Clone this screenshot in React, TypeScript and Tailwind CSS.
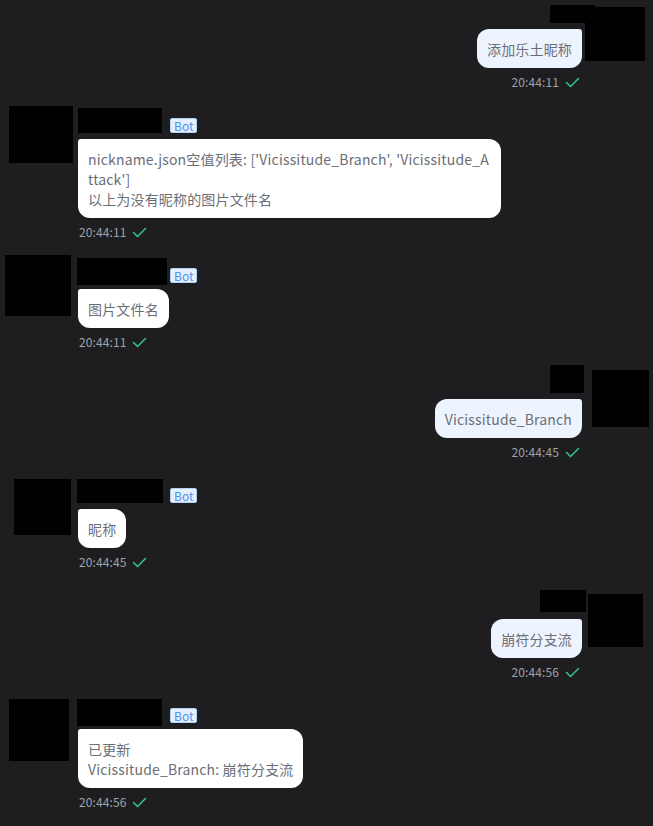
type Msg = {
  side: "left" | "right";
  lines: string[];
  time: string;
  avatar: string;
  name: string;
  first?: boolean;
};

// redaction boxes are baked in as class strings so tailwind can see them
const messages: Msg[] = [
  {
    side: "right",
    lines: ["添加乐土昵称"],
    time: "20:44:11",
    avatar: "ml-[3px] mt-[7px] w-[60px] h-[54px]",
    name: "mr-[-13px] mt-[5px] w-[45px] h-[18px]",
    first: true,
  },
  {
    side: "left",
    lines: ["nickname.json空值列表: ['Vicissitude_Branch', 'Vicissitude_Attack']", "以上为没有昵称的图片文件名"],
    time: "20:44:11",
    avatar: "ml-[9px] mt-[-2px] w-[64px] h-[57px]",
    name: "ml-[0px] mt-[0px] w-[84px] h-[25px]",
  },
  {
    side: "left",
    lines: ["图片文件名"],
    time: "20:44:11",
    avatar: "ml-[5px] mt-[-3px] w-[66px] h-[61px]",
    name: "ml-[-1px] mt-[0px] w-[90px] h-[27px]",
  },
  {
    side: "right",
    lines: ["Vicissitude_Branch"],
    time: "20:44:45",
    avatar: "ml-[10px] mt-[2px] w-[57px] h-[57px]",
    name: "mr-[-2px] mt-[-3px] w-[34px] h-[28px]",
  },
  {
    side: "left",
    lines: ["昵称"],
    time: "20:44:45",
    avatar: "ml-[14px] mt-[1px] w-[57px] h-[56px]",
    name: "ml-[-1px] mt-[1px] w-[86px] h-[24px]",
  },
  {
    side: "right",
    lines: ["崩符分支流"],
    time: "20:44:56",
    avatar: "ml-[6px] mt-[6px] w-[55px] h-[53px]",
    name: "mr-[-4px] mt-[2px] w-[46px] h-[22px]",
  },
  {
    side: "left",
    lines: ["已更新", "Vicissitude_Branch: 崩符分支流"],
    time: "20:44:56",
    avatar: "ml-[9px] mt-[1px] w-[60px] h-[62px]",
    name: "ml-[-1px] mt-[1px] w-[85px] h-[27px]",
  },
];

function Check() {
  return (
    <svg width="15" height="11" viewBox="0 0 15 11" fill="none">
      <path d="M1.5 5.5 L5.5 9.5 L13.5 1.5" stroke="#34c286" strokeWidth="1.6" strokeLinecap="round" strokeLinejoin="round" />
    </svg>
  );
}

function TimeRow({ time, right }: { time: string; right?: boolean }) {
  return (
    <div className={`mt-[6px] h-[16px] flex items-center gap-[6px] ${right ? "justify-end pr-[2px]" : "pl-[1px]"}`}>
      <span className="text-[12px] leading-[16px] tracking-[0.1px] text-[#9ea2a9]">{time}</span>
      <Check />
    </div>
  );
}

function Bubble({ lines, right }: { lines: string[]; right?: boolean }) {
  return (
    <div
      className={`max-w-[423px] px-[10px] pt-[10px] pb-[9px] text-[14px] leading-[20px] tracking-[0.17px] text-[#6a6e77] break-all rounded-[12px] ${
        right ? "bg-[#eef4fe] rounded-tr-[3px]" : "bg-white rounded-tl-[3px]"
      }`}
    >
      {lines.map((l, i) => (
        <div key={i}>{l}</div>
      ))}
    </div>
  );
}

function LeftMessage({ m }: { m: Msg }) {
  return (
    <div className="flex mt-[18px]">
      <div className="w-[78px] shrink-0">
        <div className={`bg-black ${m.avatar}`} />
      </div>
      <div className="flex flex-col items-start">
        <div className="h-[25px] mb-[6px] flex">
          <div className="w-[92px] h-[25px]">
            <div className={`bg-black ${m.name}`} />
          </div>
          <div className="self-end h-[15px] px-[3px] flex items-center text-[12px] leading-none text-[#4d94ea] bg-[#e6f0fd] border border-[#b2d0f5] rounded-[2px]">
            Bot
          </div>
        </div>
        <Bubble lines={m.lines} />
        <TimeRow time={m.time} />
      </div>
    </div>
  );
}

function RightMessage({ m }: { m: Msg }) {
  return (
    <div className={`flex justify-end ${m.first ? "" : "mt-[18px]"}`}>
      <div className="flex flex-col items-end">
        <div className={`${m.first ? "h-[23px]" : "h-[25px]"} mb-[6px] flex justify-end`}>
          <div className={`bg-black shrink-0 ${m.name}`} />
        </div>
        <Bubble lines={m.lines} right />
        <TimeRow time={m.time} right />
      </div>
      <div className="w-[71px] shrink-0">
        <div className={`bg-black ${m.avatar}`} />
      </div>
    </div>
  );
}

export default function App() {
  return (
    <div
      className="w-[653px] h-[826px] overflow-hidden bg-[#1e1e20]"
      style={{ fontFamily: '"Noto Sans CJK SC", "Noto Sans", sans-serif' }}
    >
      {messages.map((m, i) =>
        m.side === "left" ? <LeftMessage key={i} m={m} /> : <RightMessage key={i} m={m} />
      )}
    </div>
  );
}
